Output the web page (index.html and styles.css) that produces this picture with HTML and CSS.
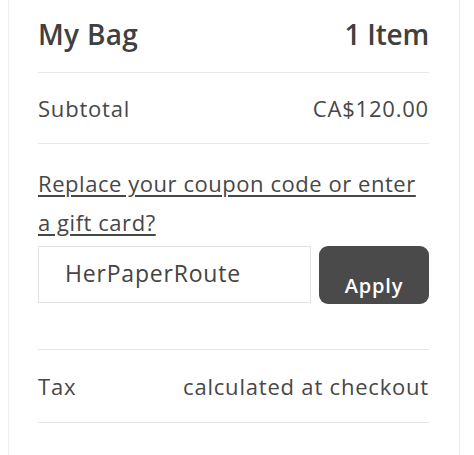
FILE: index.html
```html
<!DOCTYPE html>
<html>
<head>
<meta charset="utf-8">
<link rel="stylesheet" href="styles.css">
</head>
<body>
<div class="card">
  <div class="header">
    <span class="title">My Bag</span>
    <span class="count">1 Item</span>
  </div>
  <div class="row subtotal">
    <span>Subtotal</span>
    <span>CA$120.00</span>
  </div>
  <div class="coupon">
    <a class="coupon-link" href="#">Replace your coupon code or enter a gift card?</a>
    <div class="coupon-form">
      <div class="coupon-input">HerPaperRoute</div>
      <button class="apply">Apply</button>
    </div>
  </div>
  <div class="row tax">
    <span>Tax</span>
    <span>calculated at checkout</span>
  </div>
</div>
</body>
</html>
```
FILE: styles.css
```css
html, body {
  margin: 0;
  padding: 0;
  background: #fff;
  height: 100%;
  overflow: hidden;
}
body {
  font-family: "Open Sans", "Noto Sans", sans-serif;
  color: #474747;
  letter-spacing: 0.8px;
}
.card {
  margin-left: 8px;
  min-height: 455px;
  border-left: 1px solid #ececec;
  border-right: 1px solid #ececec;
  padding: 0 30px 0 29px;
  box-sizing: border-box;
  width: 452px;
}
.header {
  display: flex;
  justify-content: space-between;
  align-items: center;
  height: 73px;
  padding-bottom: 4px;
  box-sizing: border-box;
  border-bottom: 1px solid #e6e6e6;
  font-size: 28px;
  font-weight: 600;
  letter-spacing: 0.3px;
  color: #404040;
}
.count {
  letter-spacing: -0.2px;
}
.row {
  display: flex;
  justify-content: space-between;
  align-items: center;
  font-size: 22px;
  border-bottom: 1px solid #e6e6e6;
}
.subtotal {
  height: 70px;
}
.coupon {
  padding-top: 20px;
  height: 206px;
  border-bottom: 1px solid #e6e6e6;
  box-sizing: border-box;
}
.coupon-link {
  display: block;
  font-size: 22px;
  line-height: 39px;
  letter-spacing: 0.55px;
  color: #474747;
  text-decoration: underline;
  text-underline-offset: 3px;
  text-decoration-thickness: 1.5px;
}
.coupon-form {
  display: flex;
  gap: 8px;
  margin-top: 4px;
}
.coupon-input {
  flex: 0 0 273px;
  height: 57px;
  box-sizing: border-box;
  border: 1px solid #e2e2e2;
  padding: 0 0 4px 26px;
  display: flex;
  align-items: center;
  font-size: 23px;
  color: #444;
}
.apply {
  flex: 1;
  height: 58px;
  border: none;
  border-radius: 9px;
  background: #4a4a4a;
  color: #fff;
  font-family: "Open Sans", "Noto Sans", sans-serif;
  font-weight: 600;
  font-size: 20px;
  letter-spacing: 0.8px;
  padding: 20px 0 0;
}
.tax {
  height: 73px;
  box-sizing: border-box;
}
```
